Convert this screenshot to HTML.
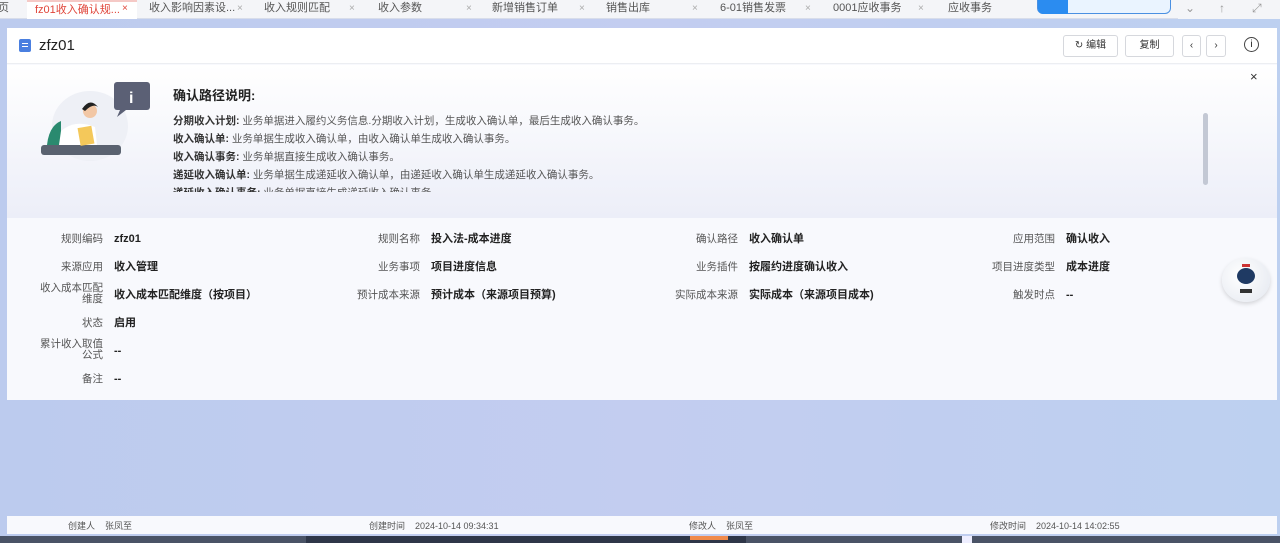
<!DOCTYPE html>
<html><head><meta charset="utf-8"><style>
*{margin:0;padding:0;box-sizing:border-box}
body{width:1280px;height:543px;overflow:hidden;font-family:"Liberation Sans","Noto Sans CJK SC",sans-serif;background:linear-gradient(90deg,#bccbee,#c3cdf0 50%,#bdd0f0);position:relative;color:#222}
.tabs{position:absolute;left:0;top:0;width:1280px;height:19px;background:#f4f5f8;font-size:11px;color:#555;border-bottom:1px solid #d8ddea}
.tab{position:absolute;top:0;height:19px;line-height:17px}
.x{position:absolute;color:#aaa;font-size:10px;top:3px}
.card{position:absolute;left:7px;top:28px;width:1270px;height:372px;background:#f8f9fd}
.hd{height:36px;background:#fff;border-bottom:1px solid #eceef2;position:relative}
.banner{position:absolute;left:0;top:37px;width:1270px;height:153px;background:linear-gradient(180deg,#fff,#eceef8)}
.btn{position:absolute;top:7px;height:22px;border:1px solid #d6d8dd;border-radius:3px;background:#fff;font-size:10px;color:#333;text-align:center;line-height:20px}
.lbl{position:absolute;font-size:10.5px;color:#555;text-align:right;width:100px;line-height:11px}
.val{position:absolute;font-size:11px;color:#222;font-weight:bold;line-height:14px}
.bl{font-size:10.5px;color:#555;line-height:18px}
.bl b{color:#333}
.foot{position:absolute;left:7px;top:516px;width:1270px;height:18px;background:#f8f9fd;font-size:9px;color:#555}
.foot span{position:absolute;top:3px}
</style></head><body>
<div class="tabs">
<div class="tab" style="left:-2px">页</div>
<div class="tab" style="left:27px;width:110px;background:#fff;color:#e0453a;padding-left:8px;border-top:2px solid #f5c9c6">fz01收入确认规...</div><span class="x" style="left:122px;color:#e0453a">×</span>
<div class="tab" style="left:149px">收入影响因素设...</div><span class="x" style="left:237px">×</span>
<div class="tab" style="left:264px">收入规则匹配</div><span class="x" style="left:349px">×</span>
<div class="tab" style="left:378px">收入参数</div><span class="x" style="left:466px">×</span>
<div class="tab" style="left:492px">新增销售订单</div><span class="x" style="left:579px">×</span>
<div class="tab" style="left:606px">销售出库</div><span class="x" style="left:692px">×</span>
<div class="tab" style="left:720px">6-01销售发票</div><span class="x" style="left:805px">×</span>
<div class="tab" style="left:833px">0001应收事务</div><span class="x" style="left:918px">×</span>
<div class="tab" style="left:948px">应收事务</div>
<div style="position:absolute;left:1037px;top:-6px;width:134px;height:20px;border:1px solid #4a90e2;border-radius:6px;background:#eaf4ff"><div style="width:30px;height:19px;background:#2b8cf0;border-radius:5px 0 0 5px"></div></div>
<div style="position:absolute;left:1178px;top:0;width:102px;height:19px;background:#f4f5f8;color:#999;font-size:12px"><span style="position:absolute;left:7px;top:1px">⌄</span><span style="position:absolute;left:41px;top:1px">↑</span><span style="position:absolute;left:74px;top:1px">⤢</span></div>
</div>
<div class="card">
<div class="hd">
<div style="position:absolute;left:12px;top:11px;width:12px;height:13px;background:#4a7fe0;border-radius:2px"><div style="margin:4px 3px;height:1px;background:#fff;box-shadow:0 3px 0 #fff"></div></div>
<div style="position:absolute;left:32px;top:9px;font-size:15px;color:#222">zfz01</div>
<div class="btn" style="left:1056px;width:55px">↻ 编辑</div>
<div class="btn" style="left:1118px;width:49px">复制</div>
<div class="btn" style="left:1175px;width:19px">‹</div>
<div class="btn" style="left:1199px;width:20px">›</div>
<div style="position:absolute;left:1237px;top:9px;width:15px;height:15px;border:1.3px solid #444;border-radius:50%;font-size:10px;text-align:center;line-height:13px">i</div>
</div>
<div class="banner">
<div style="position:absolute;left:1243px;top:4px;font-size:13px;color:#333">×</div>
<svg style="position:absolute;left:28px;top:16px" width="130" height="88" viewBox="0 0 130 88">
<ellipse cx="55" cy="45" rx="38" ry="35" fill="#eef0f6"/>
<rect x="6" y="64" width="80" height="10" rx="3" fill="#5a6270"/>
<path d="M12 64 Q14 45 26 40 L26 64Z" fill="#2a8a6f"/>
<path d="M26 50 Q40 38 60 46 L62 64 L24 64Z" fill="#fff"/>
<rect x="44" y="46" width="14" height="18" fill="#f4c85a" transform="rotate(-10 50 55)"/>
<circle cx="55" cy="30" r="7" fill="#f2c7a5"/><path d="M47 28 Q55 16 63 26 Q58 22 50 30Z" fill="#222"/>
<rect x="79" y="1" width="36" height="28" rx="3" fill="#5b6075"/><text x="94" y="22" font-size="16" fill="#fff" font-weight="bold">i</text>
<path d="M85 29 L82 36 L91 29Z" fill="#5b6075"/>
</svg>
<div style="position:absolute;left:166px;top:20px;font-size:13px;font-weight:bold;color:#222">确认路径说明:</div>
<div style="position:absolute;left:166px;top:47px;height:80px;overflow:hidden" class="bl">
<div><b>分期收入计划:</b> 业务单据进入履约义务信息.分期收入计划，生成收入确认单，最后生成收入确认事务。</div>
<div><b>收入确认单:</b> 业务单据生成收入确认单，由收入确认单生成收入确认事务。</div>
<div><b>收入确认事务:</b> 业务单据直接生成收入确认事务。</div>
<div><b>递延收入确认单:</b> 业务单据生成递延收入确认单，由递延收入确认单生成递延收入确认事务。</div>
<div><b>递延收入确认事务:</b> 业务单据直接生成递延收入确认事务。</div>
</div>
<div style="position:absolute;left:1196px;top:48px;width:5px;height:72px;background:#c3c8d4;border-radius:3px"></div>
</div>
<div style="position:absolute;top:190px;left:0;width:1270px;height:182px">
<div class="lbl" style="left:-4px;top:16px">规则编码</div><div class="val" style="left:107px;top:14px">zfz01</div>
<div class="lbl" style="left:313px;top:16px">规则名称</div><div class="val" style="left:424px;top:14px">投入法-成本进度</div>
<div class="lbl" style="left:631px;top:16px">确认路径</div><div class="val" style="left:742px;top:14px">收入确认单</div>
<div class="lbl" style="left:948px;top:16px">应用范围</div><div class="val" style="left:1059px;top:14px">确认收入</div>
<div class="lbl" style="left:-4px;top:44px">来源应用</div><div class="val" style="left:107px;top:42px">收入管理</div>
<div class="lbl" style="left:313px;top:44px">业务事项</div><div class="val" style="left:424px;top:42px">项目进度信息</div>
<div class="lbl" style="left:631px;top:44px">业务插件</div><div class="val" style="left:742px;top:42px">按履约进度确认收入</div>
<div class="lbl" style="left:948px;top:44px">项目进度类型</div><div class="val" style="left:1059px;top:42px">成本进度</div>
<div class="lbl" style="left:-4px;top:65px">收入成本匹配<br>维度</div><div class="val" style="left:107px;top:70px">收入成本匹配维度（按项目）</div>
<div class="lbl" style="left:313px;top:72px">预计成本来源</div><div class="val" style="left:424px;top:70px">预计成本（来源项目预算)</div>
<div class="lbl" style="left:631px;top:72px">实际成本来源</div><div class="val" style="left:742px;top:70px">实际成本（来源项目成本)</div>
<div class="lbl" style="left:948px;top:72px">触发时点</div><div class="val" style="left:1059px;top:70px">--</div>
<div class="lbl" style="left:-4px;top:100px">状态</div><div class="val" style="left:107px;top:98px">启用</div>
<div class="lbl" style="left:-4px;top:121px">累计收入取值<br>公式</div><div class="val" style="left:107px;top:126px">--</div>
<div class="lbl" style="left:-4px;top:156px">备注</div><div class="val" style="left:107px;top:154px">--</div>
</div>
</div>
<div style="position:absolute;left:1222px;top:258px;width:48px;height:44px;border-radius:50%;background:radial-gradient(circle at 40% 40%,#fff,#e3e7ef);box-shadow:0 2px 4px rgba(0,0,0,.15)"><div style="position:absolute;left:15px;top:10px;width:18px;height:16px;border-radius:50%;background:#1f3a63"></div><div style="position:absolute;left:20px;top:6px;width:8px;height:3px;background:#c33"></div><div style="position:absolute;left:18px;top:31px;width:12px;height:4px;background:#333"></div></div>
<div class="foot">
<span style="left:61px">创建人&nbsp;&nbsp;&nbsp;&nbsp;张凤至</span>
<span style="left:362px">创建时间&nbsp;&nbsp;&nbsp;&nbsp;2024-10-14 09:34:31</span>
<span style="left:682px">修改人&nbsp;&nbsp;&nbsp;&nbsp;张凤至</span>
<span style="left:983px">修改时间&nbsp;&nbsp;&nbsp;&nbsp;2024-10-14 14:02:55</span>
</div>
<div style="position:absolute;left:0;top:536px;width:1280px;height:7px;background:#4a5366"><div style="position:absolute;left:306px;width:440px;height:7px;background:#2e3648"></div><div style="position:absolute;left:690px;width:38px;height:4px;background:#f08a4b"></div><div style="position:absolute;left:962px;width:10px;height:7px;background:#eef"></div></div>
</body></html>
